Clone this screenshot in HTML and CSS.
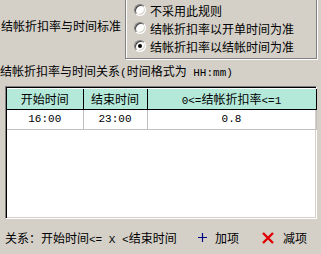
FILE: index.html
```html
<!DOCTYPE html>
<html lang="zh-CN">
<head>
    <meta charset="UTF-8">
    <title>结帐折扣率</title>
    <link rel="stylesheet" href="styles.css">
</head>
<body>
    <div class="top">
        <div class="rule-label">结帐折扣率与时间标准</div>
        <div class="rule-box">
            <div class="opt"><span class="radio"></span>不采用此规则</div>
            <div class="opt"><span class="radio"></span>结帐折扣率以开单时间为准</div>
            <div class="opt"><span class="radio checked"></span>结帐折扣率以结帐时间为准</div>
        </div>
    </div>

    <div class="caption">结帐折扣率与时间关系<span class="en">(</span>时间格式为<span class="en"> HH:mm)</span></div>

    <div class="grid-wrap">
        <table class="grid">
            <colgroup>
                <col class="c1">
                <col class="c2">
                <col class="c3">
            </colgroup>
            <tr class="head">
                <th>开始时间</th>
                <th>结束时间</th>
                <th><span class="en">0&lt;=</span>结帐折扣率<span class="en">&lt;=1</span></th>
            </tr>
            <tr class="row">
                <td class="en">16:00</td>
                <td class="en">23:00</td>
                <td class="en">0.8</td>
            </tr>
        </table>
    </div>

    <div class="footer">
        <div class="relation">关系：开始时间<span class="en">&lt;= X &lt;</span>结束时间</div>
        <div class="actions">
            <span class="action">
                <svg width="9" height="9" viewBox="0 0 9 9"><path d="M4.5 0V9M0 4.5H9" stroke="#000080" stroke-width="1.2"/></svg>
                加项
            </span>
            <span class="action">
                <svg width="14" height="14" viewBox="0 0 14 14"><path d="M2 2L12 12M12 2L2 12" stroke="#e00000" stroke-width="2.4"/></svg>
                减项
            </span>
        </div>
    </div>
</body>
</html>
```

FILE: styles.css
```css
* {
    margin: 0;
    padding: 0;
    box-sizing: border-box;
}

body {
    width: 321px;
    height: 254px;
    overflow: hidden;
    background: #d4d0c8;
    font-family: "Noto Sans CJK SC", "DejaVu Sans", sans-serif;
    font-size: 12px;
    color: #000;
}

.en {
    font-family: "Liberation Mono", monospace;
    font-size: 11px;
}

.top {
    display: flex;
    height: 60px;
}

.rule-label {
    width: 125px;
    padding-left: 1px;
    line-height: 52px;
    white-space: nowrap;
}

.rule-box {
    width: 192px;
    height: 62px;
    margin-top: -3px;
    padding: 3px 0 0 8px;
    border: 1px solid #808080;
    box-shadow: inset 1px 1px #fff, 1px 1px #fff;
}

.opt {
    display: flex;
    align-items: center;
    gap: 4px;
    height: 18px;
    white-space: nowrap;
}

.radio {
    position: relative;
    width: 12px;
    height: 12px;
    border-radius: 50%;
    background: #fff;
    border: 1px solid;
    border-color: #808080 #fff #fff #808080;
    box-shadow: inset 1px 1px #404040, inset -1px -1px #d4d0c8;
}

.radio.checked::after {
    content: "";
    position: absolute;
    left: 3px;
    top: 3px;
    width: 4px;
    height: 4px;
    border-radius: 50%;
    background: #000;
}

.caption {
    margin-top: 2px;
    line-height: 18px;
    white-space: nowrap;
}

.grid-wrap {
    margin: 4px 4px 0 5px;
    height: 133px;
    background: #fff;
    border: 1px solid;
    border-color: #808080 #fff #fff #808080;
    box-shadow: inset 1px 1px #000, inset -1px -1px #d4d0c8;
    padding: 2px 2px 0 1px;
}

.grid {
    width: 309px;
    border-collapse: collapse;
    table-layout: fixed;
}

.c1 { width: 76px; }
.c2 { width: 64px; }
.c3 { width: 169px; }

.grid th,
.grid td {
    height: 20px;
    text-align: center;
    font-weight: normal;
    white-space: nowrap;
}

.head th {
    background: #b4e9da;
    border-right: 1px solid #000;
    border-bottom: 1px solid #000;
}

.row td {
    border-right: 1px solid #c0c0c0;
    border-bottom: 1px solid #c0c0c0;
}

.footer {
    display: flex;
    justify-content: space-between;
    align-items: center;
    height: 37px;
    padding: 0 14px 0 5px;
}

.relation {
    white-space: nowrap;
}

.actions {
    display: flex;
    gap: 22px;
}

.action {
    display: flex;
    align-items: center;
    gap: 8px;
}
```
